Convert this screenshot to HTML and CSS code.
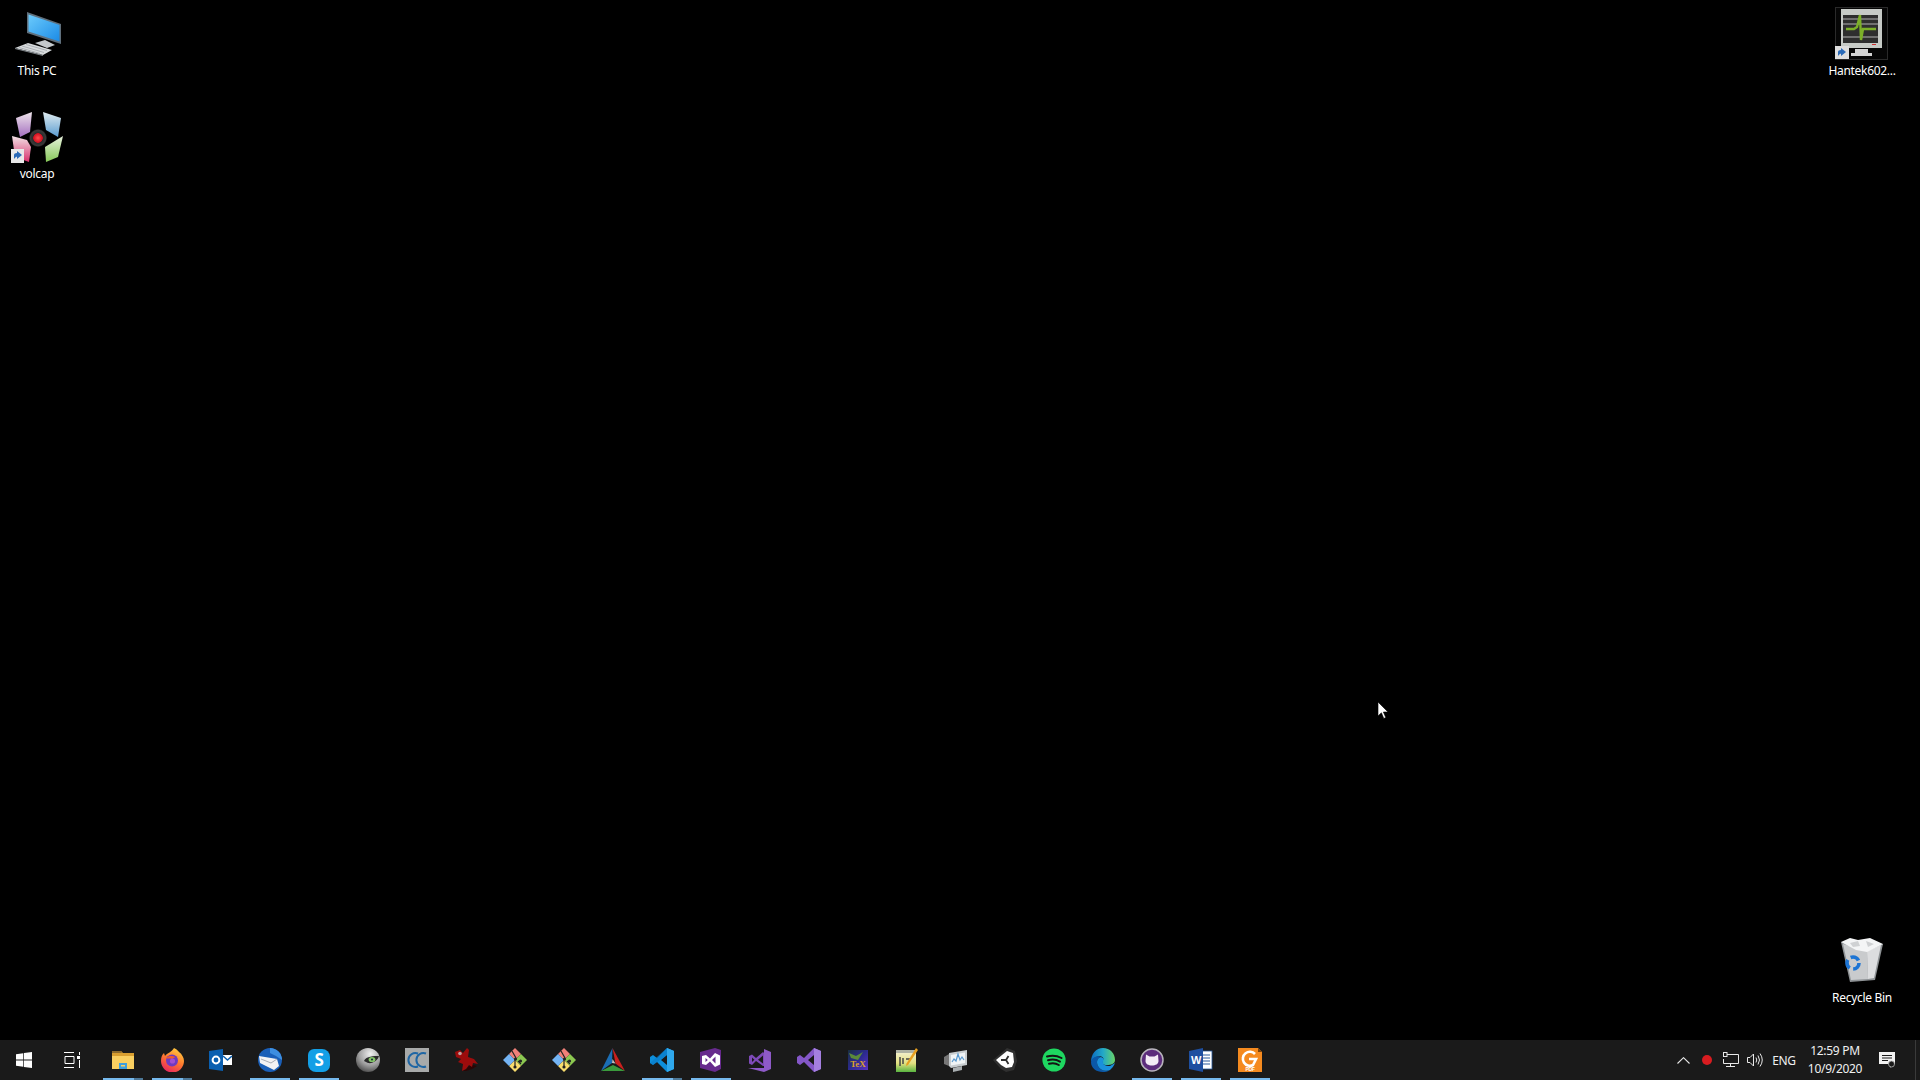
FILE: index.html
```html
<!DOCTYPE html>
<html lang="en">
<head>
<meta charset="utf-8">
<title>Desktop</title>
<link rel="stylesheet" href="styles.css">
</head>
<body>
<main class="desktop">
  <div class="desk-icon pos-pc">
    <svg class="desk-svg" viewBox="0 0 52 52">
      <defs><linearGradient id="scr" x1="0" y1="0" x2="1" y2="1"><stop offset="0" stop-color="#6ccbfc"/><stop offset="1" stop-color="#1b8be6"/></linearGradient></defs>
      <path d="M16 4 L50 16 V36 L16 25Z" fill="#5f6f7c"/>
      <path d="M17.500 6.500 L48.500 17 V33.500 L17.500 23.500Z" fill="url(#scr)"/>
      <path d="M24 35 L34 32 L44 37 L36 40Z" fill="#c4c8cb"/>
      <path d="M17 35 L41 42 L32 47 L4 40Z" fill="#d8dbdd"/>
      <path d="M4 40 L32 47 V48 L4 41Z" fill="#7e8488"/>
      <path d="M15 36.500 L36 42.500 M11 38 L33 44.500 M8 39.500 L29 45.500" stroke="#a0a5a9" stroke-width=".8"/>
    </svg>
    <span class="desk-label">This PC</span>
  </div>

  <div class="desk-icon pos-vol">
    <svg class="desk-svg" viewBox="0 0 52 52">
      <defs>
        <linearGradient id="v1" x1="0" y1="0" x2="0" y2="1"><stop offset="0" stop-color="#eee4ea"/><stop offset="1" stop-color="#a46fc0"/></linearGradient>
        <linearGradient id="v2" x1="0" y1="0" x2="0" y2="1"><stop offset="0" stop-color="#e0ecf0"/><stop offset="1" stop-color="#5a9cd0"/></linearGradient>
        <linearGradient id="v3" x1="0" y1="0" x2="0" y2="1"><stop offset="0" stop-color="#f2e2e6"/><stop offset="1" stop-color="#d8306c"/></linearGradient>
        <linearGradient id="v4" x1="0" y1="0" x2="0" y2="1"><stop offset="0" stop-color="#e8f2de"/><stop offset="1" stop-color="#86c858"/></linearGradient>
        <radialGradient id="v5" cx=".5" cy=".5" r=".5"><stop offset="0" stop-color="#ff4c4c"/><stop offset=".5" stop-color="#d01020"/><stop offset=".56" stop-color="#2c2c2c"/><stop offset=".85" stop-color="#3a3a3a"/><stop offset="1" stop-color="#0c0c0c"/></radialGradient>
      </defs>
      <g transform="translate(0 1)">
        <path d="M5 6 L21 0 L19 20 L9 25Z" fill="url(#v1)"/>
        <path d="M32 0 L50 6 L47 25 L35 18Z" fill="url(#v2)"/>
        <path d="M1 24 L16 28 L20 35 L18 50 L4 45Z" fill="url(#v3)"/>
        <path d="M34 35 L52 24 L47 45 L35 50Z" fill="url(#v4)"/>
        <circle cx="27" cy="26" r="9" fill="url(#v5)"/>
        <rect x="0" y="37" width="13" height="14" fill="#e8e8e8"/>
        <path d="M3 47 V43 Q3 41 6 41 V39 L11 43 L6 47 V44.500 Q4 45 3 47Z" fill="#2a6ab8"/>
      </g>
    </svg>
    <span class="desk-label">volcap</span>
  </div>

  <div class="desk-icon pos-han">
    <svg class="desk-svg" viewBox="0 0 52 52">
      <rect x="-.5" y="-.5" width="52" height="52" fill="#060606" stroke="#2a2a2a"/>
      <path d="M5 1 H46 V40 H5Z" fill="#c6cac6"/>
      <rect x="7" y="7" width="35" height="28" fill="#2e2e2e"/>
      <path d="M7 11 H42 M7 16 H42 M7 29 H42" stroke="#707070" stroke-width="2"/>
      <path d="M10 21 H18 L21 19 L24 7 L25 32 L27 21 H40" stroke="#7cb028" stroke-width="2.400" fill="none"/>
      <rect x="36" y="36" width="4" height="1" fill="#d03030"/>
      <path d="M19 41 H32 V45 H36 V48 H15 V45 H19Z" fill="#d4d4d4"/>
      <rect x="-1" y="38" width="14" height="13" fill="#dedede"/>
      <path d="M2 48 V44 Q2 42 5 42 V40 L10 44 L5 48 V45.500 Q3 46 2 48Z" fill="#2a6ab8"/>
    </svg>
    <span class="desk-label">Hantek602...</span>
  </div>

  <div class="desk-icon pos-bin">
    <svg class="desk-svg" viewBox="0 0 52 52">
      <path d="M5 7 L47 9 L39 45 L14 47Z" fill="#8f9396"/>
      <path d="M7 9 L31 16 L32 44 L15 45Z" fill="#c9cbcd"/>
      <path d="M31 16 L45 10 L38 43 L32 44Z" fill="#dcdddf"/>
      <path d="M5 7 L14 3 L22 5 L34 3 L47 9 L31 17 L20 15Z" fill="#f4f5f6"/>
      <path d="M14 8 L22 6 L24 11 L17 12Z M30 6 L38 9 L32 12Z" fill="#cfd1d3"/>
      <circle cx="17" cy="28" r="6" fill="none" stroke="#1c74d4" stroke-width="3.600" stroke-dasharray="9 3.560"/>
    </svg>
    <span class="desk-label">Recycle Bin</span>
  </div>

  <svg class="cursor" viewBox="0 0 12 19"><path d="M1 1 V15 L4.400 11.800 L6.800 17.500 L8.800 16.600 L6.400 11 H11Z" fill="#fff" stroke="#000" stroke-width=".6"/></svg>
</main>

<footer class="taskbar">
  <div class="sys-btn">
    <svg class="logo" viewBox="0 0 16 16"><path fill="#fff" d="M0 2.200 7.300 1.200V7.600H0ZM8 1.100 16 0V7.600H8ZM0 8.400H7.300V14.800L0 13.800ZM8 8.400H16V16L8 14.900Z"/></svg>
  </div>
  <div class="sys-btn">
    <svg class="logo" viewBox="0 0 16 16" fill="none" stroke="#fff"><path d="M0 .5H10M0 15.500H10M1 4.500H10V11.500H1ZM15.500 0V3M15.500 8V16" /><rect x="13" y="4" width="3" height="3" fill="#fff" stroke="none"/></svg>
  </div>
  <div class="apps">
    <div class="app on stack">
      <svg class="ico" viewBox="0 0 24 24"><path d="M1 3H10L12 5H23V21H1Z" fill="#d99f30"/><path d="M1 3H10L11 5H1Z" fill="#8c6a2c"/><path d="M1 8H23V21H1Z" fill="#f9cf60"/><path d="M8 15H16V21H8Z" fill="#3f9fdc"/><rect x="10" y="17" width="4" height="1.500" fill="#f9cf60"/></svg>
    </div>
    <div class="app on stack">
      <svg class="ico" viewBox="0 0 24 24"><defs><linearGradient id="ff" x1=".8" y1="0" x2=".3" y2="1"><stop offset="0" stop-color="#ffd23f"/><stop offset=".5" stop-color="#ff7a2e"/><stop offset="1" stop-color="#e8265e"/></linearGradient></defs><path d="M14 0 C18 2 18 3 19 4 C22 6 24 10 24 13 A11.500 11.500 0 0 1 1 13 C1 9 2 7 4 5 L5 8 C7 5 12 4 14 0Z" fill="url(#ff)"/><circle cx="12" cy="12.500" r="6" fill="#6e3ac0"/><path d="M6 10 C9 7 13 8 15.500 9 L12 11 C10 10 8 11 6 10Z" fill="#f0592c"/><circle cx="12.500" cy="13" r="2.600" fill="#a24fd0"/></svg>
    </div>
    <div class="app">
      <svg class="ico" viewBox="0 0 24 24"><rect x="14" y="7" width="9" height="10" fill="#fff"/><path d="M14 8 L18.500 12 L23 8" fill="none" stroke="#0a5fb0" stroke-width="1.500"/><path d="M0 3 L14 1 V23 L0 21Z" fill="#0a5fb0"/><circle cx="7" cy="12" r="3.400" fill="none" stroke="#fff" stroke-width="2"/></svg>
    </div>
    <div class="app on">
      <svg class="ico" viewBox="0 0 24 24"><circle cx="12" cy="12" r="12" fill="#1a5fb8"/><path d="M12 0 A12 12 0 0 1 24 12 L18 8 L12 5Z" fill="#3d8ee0"/><path d="M1 8 L19 11 L21 18 L16 22 L2 15Z" fill="#f2f2f4"/><path d="M3 11 L13 15 L19 11" fill="none" stroke="#a8acb4" stroke-width="1"/></svg>
    </div>
    <div class="app on">
      <svg class="ico" viewBox="0 0 24 24"><path d="M7 1 H15 A8 8 0 0 1 23 9 V17 A7 7 0 0 1 16 24 H9 A8 8 0 0 1 1 16 V7 A6 6 0 0 1 7 1Z" fill="#139fe6"/><text class="ico-s" x="12" y="18.400" text-anchor="middle">S</text></svg>
    </div>
    <div class="app">
      <svg class="ico" viewBox="0 0 24 24"><defs><radialGradient id="eye" cx=".6" cy=".25" r=".85"><stop offset="0" stop-color="#f0f0f0"/><stop offset=".55" stop-color="#a0a0a0"/><stop offset="1" stop-color="#3c3c3c"/></radialGradient></defs><circle cx="12" cy="12" r="12" fill="url(#eye)"/><path d="M8 13 C10 8 18 8 23 8 C22 12 17 16 12 15Z" fill="#2a2a2a"/><ellipse cx="16" cy="11.500" rx="3.400" ry="2.600" fill="#84c468"/><circle cx="16" cy="11.500" r="1" fill="#123"/></svg>
    </div>
    <div class="app">
      <svg class="ico" viewBox="0 0 24 24"><rect width="24" height="24" fill="#a8aaaa"/><path d="M13 5.500 A7 7 0 1 0 13 18.500 M21 5.500 A7 7 0 1 0 21 18.500" fill="none" stroke="#1f66a4" stroke-width="2"/></svg>
    </div>
    <div class="app">
      <svg class="ico" viewBox="0 0 24 24"><path d="M9 23 L12 21 L15 18 L19 17 L23 18 L18 21 L12 23Z" fill="#2c0505"/><path d="M1 4 L6 2 L9 5 L13 0 L15 2 L14 9 L20 11 L24 16 L19 15 L18 19 L15 17 L12 21 L8 23 L9 16 L4 14 L7 11 L2 9Z" fill="#9c0c0c"/><circle cx="6" cy="5.500" r="1.800" fill="#b8a0a0"/></svg>
    </div>
    <div class="app">
      <svg class="ico" viewBox="0 0 24 24"><defs><g id="git-mark"><path d="M12 0 L18 6 L12 12 L6 6Z" fill="#f08078"/><path d="M18 6 L24 12 L18 18 L12 12Z" fill="#8cc850"/><path d="M12 12 L18 18 L12 24 L6 18Z" fill="#f8dc6c"/><path d="M6 6 L12 12 L6 18 L0 12Z" fill="#74b4f4"/><path d="M9 3 L13 10 M15 13 L18 16 M12 12 V20" stroke="#222" stroke-width="1.200"/><circle cx="12.500" cy="11" r="1.600" fill="#222"/><circle cx="17.500" cy="13" r="1.600" fill="#222"/><circle cx="12" cy="19" r="1.600" fill="#222"/></g></defs><use href="#git-mark"/></svg>
    </div>
    <div class="app">
      <svg class="ico" viewBox="0 0 24 24"><use href="#git-mark"/></svg>
    </div>
    <div class="app">
      <svg class="ico" viewBox="0 0 24 24"><path d="M11.500 0 L0 23 L11 15Z" fill="#1b6eb4"/><path d="M11.500 0 L24 23 L14.500 15.500Z" fill="#c9201e"/><path d="M0 23 H24 L12 17Z" fill="#3a9a3c"/><path d="M11.500 11 L14.500 15.500 L11 15Z" fill="#bfbfbf"/></svg>
    </div>
    <div class="app on stack">
      <svg class="ico" viewBox="0 0 24 24"><path d="M17 0 L24 3 V21 L17 24 L7 14 L3 17 L0 15 V9 L3 7 L7 10Z M17 7 L11 12 L17 17Z" fill="#0d8fdc" fill-rule="evenodd"/><path d="M17 0 L24 3 V21 L17 24Z" fill="#2fa8ec"/><path d="M0 15 L17 0 V7 L3 17Z" fill="#0a78c4" opacity=".55"/></svg>
    </div>
    <div class="app on">
      <svg class="ico" viewBox="0 0 24 24"><path d="M1 4 L16 0 L22 2 V21 L16 24 L1 20Z" fill="#672a8d"/><path d="M3 8 L7 7 L11 10.500 L16 5 L21 7.500 V16.500 L16 19 L11 13.500 L7 17 L3 16Z M6.500 10 V14 L8.800 12Z M16.500 8.500 L13 12 L16.500 15.500Z" fill="#fff" fill-rule="evenodd"/></svg>
    </div>
    <div class="app">
      <svg class="ico" viewBox="0 0 24 24"><path d="M16 1 L23 4 V21 L16 24 L0 20 L16 20Z" fill="#8e5ac8"/><path d="M1 8 L4 6.500 L8 10 L15 4 L16 5 V18 L15 18 L8 13 L4 17 L1 15.500Z M4 9.500 V14 L6.400 11.800Z M15 7.500 L10 11.800 L15 15.500Z" fill="#7e4ab8" fill-rule="evenodd"/></svg>
    </div>
    <div class="app">
      <svg class="ico" viewBox="0 0 24 24"><path d="M17 0 L24 3 V21 L17 24 L7 14 L3 17 L0 15 V9 L3 7 L7 10Z M17 7 L11 12 L17 17Z" fill="#8457c8" fill-rule="evenodd"/><path d="M17 0 L24 3 V21 L17 24Z" fill="#a47fe0"/></svg>
    </div>
    <div class="app">
      <svg class="ico ico-sm" viewBox="0 0 20 20"><defs><linearGradient id="tx" x1="0" y1="0" x2="1" y2="1"><stop offset="0" stop-color="#1a3040"/><stop offset=".5" stop-color="#2c2a90"/><stop offset="1" stop-color="#5a34c0"/></linearGradient></defs><rect width="20" height="20" fill="url(#tx)"/><path d="M1 3 L8 6 L15 2 L10 10 L3 8Z" fill="#5a8a3a"/><text class="ico-tex" x="10" y="17" text-anchor="middle">TeX</text></svg>
    </div>
    <div class="app">
      <svg class="ico" viewBox="0 0 24 24"><defs><linearGradient id="np" x1="0" y1="0" x2="0" y2="1"><stop offset="0" stop-color="#f4f2dc"/><stop offset=".6" stop-color="#e4e080"/><stop offset="1" stop-color="#58b440"/></linearGradient></defs><rect x="1" y="2" width="20" height="22" fill="url(#np)"/><rect x="1" y="2" width="20" height="3" fill="#aeb2a4"/><path d="M5 9 V18 M8 10 V16 M11 11 H15" stroke="#444" stroke-width="1.500"/><path d="M21 0 L23 2 L13 17 L11 18 L11.500 15.500Z" fill="#e8a020"/></svg>
    </div>
    <div class="app">
      <svg class="ico" viewBox="0 0 24 24"><path d="M0 9 L5 6 V18 L0 16Z" fill="#777"/><path d="M5 5 L23 2 V17 L7 20 L5 18Z" fill="#c8cdd0"/><path d="M7 7 L21 4.500 V15 L7 17.500Z" fill="#f0f4f6"/><path d="M8 14 L10 11 L12 13 L14 6 L16 12 L18 9 L20 12" fill="none" stroke="#5a9ad0" stroke-width="1.200"/><path d="M9 20 L18 18 V22 L9 24Z" fill="#a8adb0"/></svg>
    </div>
    <div class="app">
      <svg class="ico" viewBox="0 0 24 24"><path d="M14 0 L22 3 L24 13 L21 22 L13 24 L8 21 L0 12 L7 6Z" fill="#303030"/><path d="M3 12 L9 7 L14 3 L20 5 L21 14 L19 19 L13 20 L8 17Z" fill="#fff"/><path d="M8 12 H13 L15.500 8 M13 12 L15.500 16" fill="none" stroke="#303030" stroke-width="1.800"/></svg>
    </div>
    <div class="app">
      <svg class="ico" viewBox="0 0 24 24"><circle cx="12" cy="12" r="11.600" fill="#1ed760"/><path d="M5 8.500 C10 7 15 7.500 19.500 10 M6 12.300 C10 11 14.500 11.500 18 13.600 M7 15.800 C10 15 14 15.200 16.800 17" fill="none" stroke="#141414" stroke-width="2" stroke-linecap="round"/></svg>
    </div>
    <div class="app">
      <svg class="ico" viewBox="0 0 24 24"><defs><linearGradient id="ed" x1="0" y1="0" x2="1" y2="0"><stop offset="0" stop-color="#0c6bc0"/><stop offset=".5" stop-color="#22a8c8"/><stop offset="1" stop-color="#68d468"/></linearGradient></defs><path d="M12 0 C19 0 24 5 24 12 C24 16 20 17 16 17 C12 17 10 15 12 12 C14 9 9 7 5 9 C2 10.500 .5 13 0 14 C0 6 5 0 12 0Z" fill="url(#ed)"/><path d="M0 14 C1 9 7 7 10 9 C6 10 5 14 7 18 C9 22 14 24 19 22 C16 24 14 24 12 24 C5 24 0 20 0 14Z" fill="#0b58a8"/><path d="M7 18 C5 14 6 10 10 9 C13 10 13 11 12 13 C11 16 14 18 19 18 L24 15 C23 18 21 20 19 22 C14 24 9 22 7 18Z" fill="#1a90dc"/></svg>
    </div>
    <div class="app on">
      <svg class="ico" viewBox="0 0 24 24"><circle cx="12" cy="12" r="11" fill="#5c2c7c" stroke="#b8b4bc" stroke-width="1.500"/><path d="M6 6.500 L9.500 8.500 H14.500 L18 6.500 L18.500 13 C18.500 16 15.500 17.500 12 17.500 C8.500 17.500 5.500 16 5.500 13Z" fill="#f4ecf6"/></svg>
    </div>
    <div class="app on">
      <svg class="ico" viewBox="0 0 24 24"><rect x="10" y="3" width="13" height="18" fill="#fff" stroke="#2a5a9e" stroke-width=".8"/><path d="M13 7 H21 M13 10 H21 M13 13 H21 M13 16 H21" stroke="#2a5a9e" stroke-width="1.100"/><path d="M0 3 L14 0 V24 L0 21Z" fill="#1e4fa0"/><text class="ico-w" x="7" y="16" text-anchor="middle">W</text></svg>
    </div>
    <div class="app on">
      <svg class="ico" viewBox="0 0 24 24"><path d="M0 0 H20 L24 4 V24 H0Z" fill="#f58a1f"/><path d="M20 0 L24 4 H20Z" fill="#7a4410"/><path d="M17 6 A7 7 0 1 0 15 17 L18 11 H11" fill="none" stroke="#fff" stroke-width="2.600"/><text class="ico-pdf" x="12" y="23" text-anchor="middle">PDF</text></svg>
    </div>
  </div>

  <div class="tray">
    <div class="tray-item">
      <svg class="tray-chev" viewBox="0 0 13 7" fill="none" stroke="#e8e8e8" stroke-width="1.100"><path d="M.5 6.500 6.500 .7 12.500 6.500"/></svg>
    </div>
    <div class="tray-item"><span class="rec"></span></div>
    <div class="tray-item">
      <svg class="tray-ico" viewBox="0 0 16 16" fill="none" stroke="#e8e8e8"><path d="M4 2.500H15.500V11.500H.5V7M3 14.500H12M7.500 11.500V14.500"/><rect x=".5" y=".5" width="3.500" height="4"/></svg>
    </div>
    <div class="tray-item">
      <svg class="tray-ico" viewBox="0 0 16 16" fill="none" stroke="#e8e8e8"><path d="M.5 5.500H3L6.500 2V14L3 10.500H.5Z M9 5.500Q10.500 8 9 10.500 M11 3.500Q14 8 11 12.500 M13 1.500Q17.500 8 13 14.500"/></svg>
    </div>
    <div class="tray-text lang">ENG</div>
    <div class="tray-text clock"><span>12:59 PM</span><span>10/9/2020</span></div>
    <div class="tray-item notif">
      <svg class="tray-ico" viewBox="0 0 16 16"><path d="M0 0H16V12H13.500L11 16V12H0Z" fill="#f2f2f2"/><path d="M3 3.500H13M3 6H13M3 8.500H9" stroke="#1a1a1a"/><circle cx="12.500" cy="12" r="3" fill="#1a1a1a" stroke="#bbb" stroke-width=".8"/></svg>
    </div>
    <div class="show-desktop"></div>
  </div>
</footer>
</body>
</html>
```

FILE: styles.css
```css
* { box-sizing: border-box; }
html, body { margin: 0; height: 100%; }
body {
  width: 1920px;
  height: 1080px;
  display: flex;
  flex-direction: column;
  overflow: hidden;
  background: #000;
  font-family: "Noto Sans", "Open Sans", sans-serif;
  color: #fff;
  letter-spacing: -0.3px;
}
.desktop { position: relative; flex: 1 1 auto; }
.desk-icon {
  position: absolute;
  width: 74px;
  display: flex;
  flex-direction: column;
  align-items: center;
}
.desk-svg { width: 52px; height: 52px; display: block; overflow: visible; }
.desk-label {
  font-size: 12px;
  line-height: 16px;
  margin-top: 3px;
  white-space: nowrap;
  text-shadow: 0 1px 2px #000;
}
.pos-pc { left: 0; top: 8px; }
.pos-vol { left: 0; top: 111px; }
.pos-han { left: 1825px; top: 8px; }
.pos-bin { left: 1825px; top: 935px; }
.cursor { position: absolute; left: 1377px; top: 701px; width: 12px; height: 19px; }

.taskbar {
  flex: 0 0 40px;
  height: 40px;
  background: #1a1a1a;
  display: flex;
  align-items: stretch;
}
.sys-btn { width: 48px; display: flex; align-items: center; justify-content: center; }
.logo { width: 16px; height: 16px; display: block; }
.apps { display: flex; margin-left: 2px; }
.app {
  position: relative;
  width: 49px;
  display: flex;
  align-items: center;
  justify-content: center;
}
.app.on::after {
  content: "";
  position: absolute;
  left: 5px;
  bottom: 0;
  width: 40px;
  height: 2px;
  background: #76b9ed;
}
.app.stack::after {
  background: linear-gradient(to right, #76b9ed 0 31px, #4d7898 31px);
}
.ico { width: 24px; height: 24px; display: block; }
.ico-sm { width: 20px; height: 20px; }
.ico-s { font: 700 17px "Noto Sans", sans-serif; fill: #fff; }
.ico-tex { font: 700 9px "Liberation Serif", serif; fill: #dca02c; letter-spacing: 0; }
.ico-w { font: 700 11px "Liberation Sans", sans-serif; fill: #fff; }
.ico-pdf { font: 700 5px "Liberation Sans", sans-serif; fill: #fff; }

.tray { margin-left: auto; display: flex; align-items: stretch; }
.tray-item { width: 24px; display: flex; align-items: center; justify-content: center; }
.tray-chev { width: 13px; height: 7px; }
.tray-ico { width: 16px; height: 16px; display: block; }
.rec {
  width: 10px;
  height: 10px;
  margin-top: -1px;
  border-radius: 50%;
  background: #d81c20;
}
.tray-text {
  font-size: 12px;
  color: #f0f0f0;
  display: flex;
  align-items: center;
  justify-content: center;
}
.lang { width: 34px; }
.clock { width: 68px; flex-direction: column; line-height: 18px; }
.notif { width: 36px; }
.show-desktop { width: 15px; position: relative; }
.show-desktop::after {
  content: "";
  position: absolute;
  left: 10px;
  top: 0;
  width: 1px;
  height: 40px;
  background: #3a3a3a;
}
```
